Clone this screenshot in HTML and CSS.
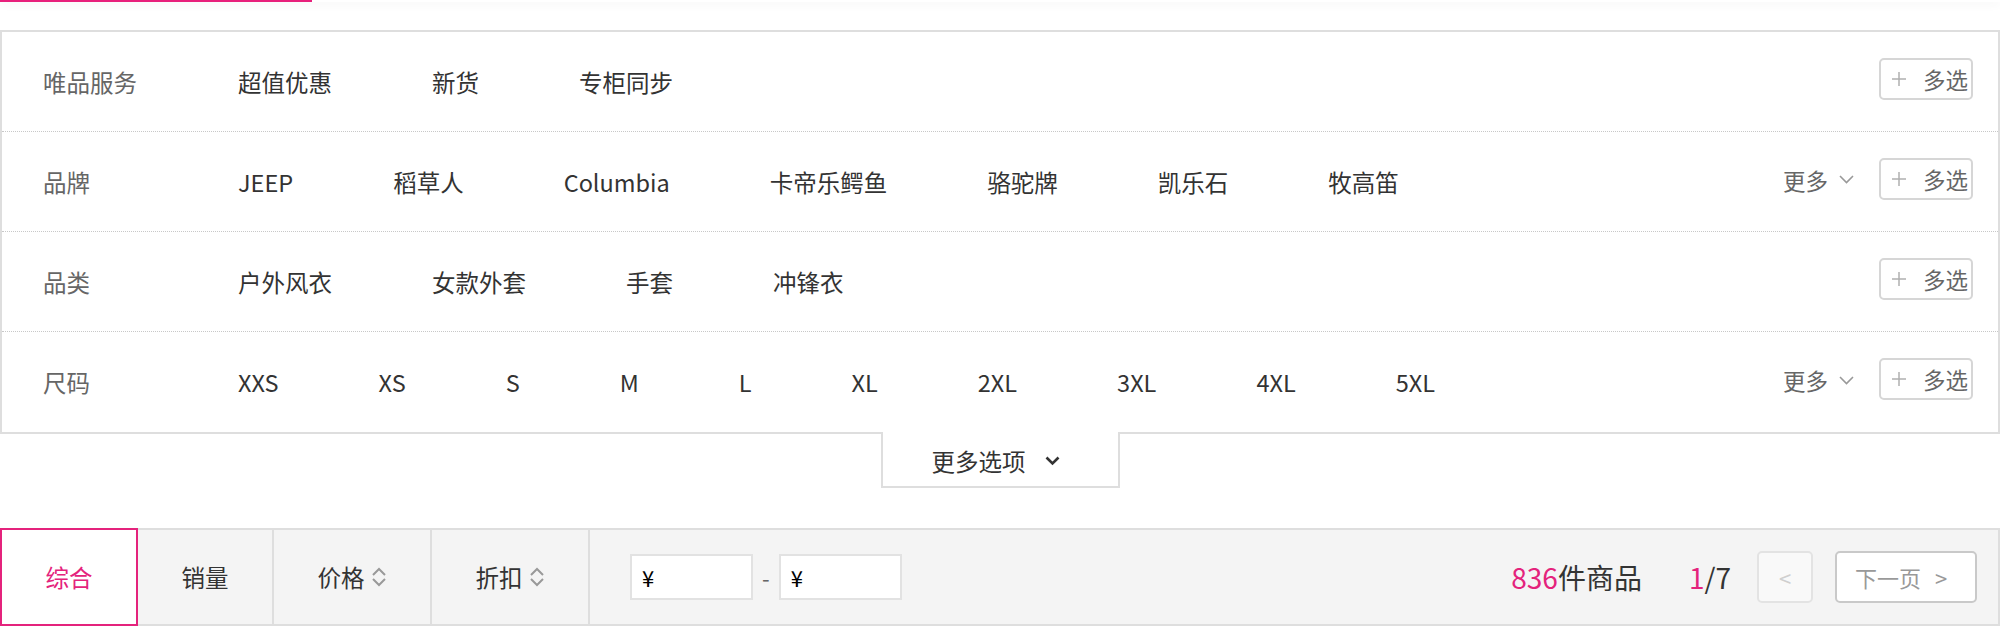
FILE: index.html
```html
<!DOCTYPE html>
<html lang="zh-CN">
<head>
<meta charset="utf-8">
<title>筛选</title>
<link rel="stylesheet" href="styles.css">
</head>
<body>
<div class="topbar"><div class="topbar-active"></div></div>

<div class="filter">
  <div class="frow">
    <div class="flabel">唯品服务</div>
    <ul class="fvals"><li>超值优惠</li><li>新货</li><li>专柜同步</li></ul>
    <div class="factions">
      <button class="multi"><svg class="plus" width="14" height="14" viewBox="0 0 14 14"><path d="M7 0V14M0 7H14"/></svg><span>多选</span></button>
    </div>
  </div>
  <div class="frow">
    <div class="flabel">品牌</div>
    <ul class="fvals"><li>JEEP</li><li>稻草人</li><li>Columbia</li><li>卡帝乐鳄鱼</li><li>骆驼牌</li><li>凯乐石</li><li>牧高笛</li></ul>
    <div class="factions">
      <span class="more">更多<svg width="15" height="9" viewBox="0 0 15 9"><path d="M1 1L7.5 7.5L14 1"/></svg></span>
      <button class="multi"><svg class="plus" width="14" height="14" viewBox="0 0 14 14"><path d="M7 0V14M0 7H14"/></svg><span>多选</span></button>
    </div>
  </div>
  <div class="frow">
    <div class="flabel">品类</div>
    <ul class="fvals"><li>户外风衣</li><li>女款外套</li><li>手套</li><li>冲锋衣</li></ul>
    <div class="factions">
      <button class="multi"><svg class="plus" width="14" height="14" viewBox="0 0 14 14"><path d="M7 0V14M0 7H14"/></svg><span>多选</span></button>
    </div>
  </div>
  <div class="frow">
    <div class="flabel">尺码</div>
    <ul class="fvals"><li>XXS</li><li>XS</li><li>S</li><li>M</li><li>L</li><li>XL</li><li>2XL</li><li>3XL</li><li>4XL</li><li>5XL</li></ul>
    <div class="factions">
      <span class="more">更多<svg width="15" height="9" viewBox="0 0 15 9"><path d="M1 1L7.5 7.5L14 1"/></svg></span>
      <button class="multi"><svg class="plus" width="14" height="14" viewBox="0 0 14 14"><path d="M7 0V14M0 7H14"/></svg><span>多选</span></button>
    </div>
  </div>
</div>

<div class="more-wrap">
  <div class="more-tab">更多选项<svg width="15" height="10" viewBox="0 0 15 10"><path d="M1.5 1.5L7.5 7.5L13.5 1.5"/></svg></div>
</div>

<div class="sortbar">
  <div class="tab active">综合</div>
  <div class="tab">销量</div>
  <div class="tab">价格<svg class="sorticon" width="16" height="22" viewBox="0 0 16 22"><path d="M2 9L8 3L14 9M2 13L8 19L14 13"/></svg></div>
  <div class="tab">折扣<svg class="sorticon" width="16" height="22" viewBox="0 0 16 22"><path d="M2 9L8 3L14 9M2 13L8 19L14 13"/></svg></div>
  <div class="price">
    <div class="pinput">¥</div>
    <span class="dash">-</span>
    <div class="pinput">¥</div>
  </div>
  <div class="count"><em>836</em>件商品</div>
  <div class="pager"><em>1</em>/7</div>
  <button class="pbtn prev">&lt;</button>
  <button class="pbtn next"><span>下一页</span><span class="gt">&gt;</span></button>
</div>
</body>
</html>
```

FILE: styles.css
```css
html, body {
  margin: 0;
  padding: 0;
  background: #fff;
}

body {
  font-family: "Noto Sans CJK SC", "Noto Sans", sans-serif;
  font-size: 23.5px;
  color: #333;
  width: 2000px;
}

button {
  font-family: inherit;
  cursor: pointer;
}

.topbar {
  height: 2px;
  box-shadow: 0 2px 8px rgba(0, 0, 0, 0.09);
}

.topbar-active {
  width: 312px;
  height: 2px;
  background: #e8207c;
}

.filter {
  margin-top: 28px;
  border: 2px solid #dedede;
}

.frow {
  display: flex;
  align-items: center;
  height: 99px;
  border-bottom: 1px dotted #c8c8c8;
}

.frow:last-child {
  border-bottom: 0;
  height: 100px;
}

.flabel {
  flex: none;
  width: 195px;
  padding-left: 41px;
  color: #666;
}

.fvals {
  display: flex;
  gap: 100px;
  margin: 0;
  padding: 0;
  list-style: none;
  color: #333;
}

.factions {
  margin-left: auto;
  margin-right: 25px;
  display: flex;
  align-items: center;
}

.more {
  display: flex;
  align-items: center;
  gap: 11px;
  margin-right: 25px;
  color: #666;
  font-size: 22.5px;
  margin-bottom: 4px;
}

.more svg path {
  fill: none;
  stroke: #999;
  stroke-width: 1.6;
}

.multi {
  box-sizing: border-box;
  width: 94px;
  height: 42px;
  margin-bottom: 6px;
  border: 2px solid #d6d6d6;
  border-radius: 5px;
  background: #fff;
  display: flex;
  align-items: center;
  gap: 17px;
  padding: 0 0 0 11px;
  color: #666;
  font-size: 22.5px;
}

.plus path {
  fill: none;
  stroke: #b0b0b0;
  stroke-width: 1.5;
}

.more-wrap {
  display: flex;
  justify-content: center;
}

.more-tab {
  box-sizing: border-box;
  width: 239px;
  height: 56px;
  margin-top: -2px;
  border: 2px solid #dedede;
  border-top: 0;
  background: #fff;
  display: flex;
  align-items: center;
  gap: 19px;
  padding: 4px 0 0 49px;
  color: #333;
}

.more-tab svg path {
  fill: none;
  stroke: #333;
  stroke-width: 2.6;
}

.sortbar {
  margin-top: 40px;
  box-sizing: border-box;
  height: 98px;
  border: 2px solid #dedede;
  background: #f4f4f4;
  display: flex;
  align-items: center;
}

.tab {
  align-self: stretch;
  display: flex;
  align-items: center;
  padding: 0 43.5px;
  border-right: 2px solid #dedede;
  color: #333;
}

.tab.active {
  margin: -2px 0 -2px -2px;
  padding: 0 43.5px;
  border: 2px solid #e4237c;
  background: #fff;
  color: #e4237c;
}

.sorticon {
  margin-left: 6px;
}

.sorticon path {
  fill: none;
  stroke: #999;
  stroke-width: 2;
}

.price {
  display: flex;
  align-items: center;
  margin-left: 40px;
}

.pinput {
  box-sizing: border-box;
  width: 123px;
  height: 46px;
  border: 2px solid #e2e2e2;
  background: #fff;
  display: flex;
  align-items: center;
  padding-left: 10px;
  color: #000;
  font-size: 22px;
}

.dash {
  margin: 0 9px;
  color: #666;
  font-size: 22px;
}

.count {
  margin-left: auto;
  font-size: 28px;
  color: #333;
}

.count em,
.pager em {
  font-style: normal;
  color: #e4237c;
}

.pager {
  margin-left: 47px;
  font-size: 28px;
  color: #333;
}

.pbtn {
  box-sizing: border-box;
  height: 52px;
  border-radius: 5px;
  display: flex;
  align-items: center;
  justify-content: center;
  font-size: 22px;
}

.prev {
  width: 56px;
  margin-left: 26px;
  border: 2px solid #e3e3e3;
  background: #f9f9f9;
  color: #cfcfcf;
}

.next {
  width: 142px;
  margin-left: 22px;
  margin-right: 21px;
  border: 2px solid #c9c9c9;
  background: #fff;
  color: #999;
  justify-content: flex-start;
  padding-left: 18px;
  gap: 14px;
}
```
